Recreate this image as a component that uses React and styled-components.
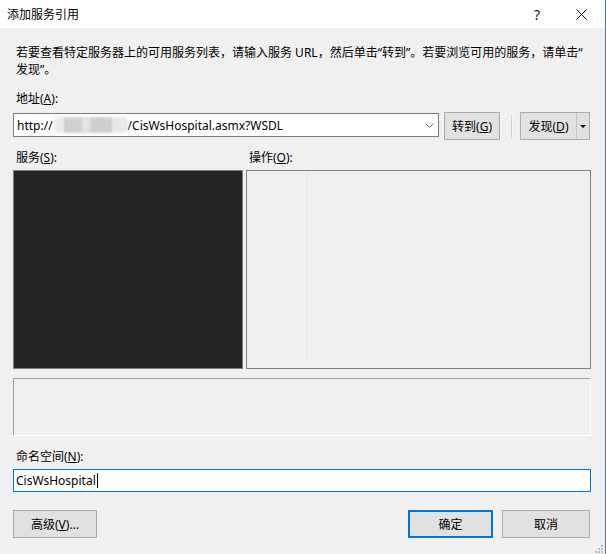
import React from "react";
import styled, { createGlobalStyle } from "styled-components";

const Global = createGlobalStyle`
  html, body { margin: 0; padding: 0; background: #f0f0f0; }
  body {
    font-family: "Segoe UI", "Noto Sans", "Noto Sans CJK SC", sans-serif;
    font-size: 12px;
    color: #000;
  }
  u { text-underline-offset: 1px; }
`;

const Window = styled.div`
  width: 606px;
  height: 554px;
  box-sizing: border-box;
  border-right: 1px solid #1a7fd4;
  background: #f0f0f0;
  display: flex;
  flex-direction: column;
  position: relative;
  overflow: hidden;
`;

const TitleBar = styled.div`
  height: 28px;
  flex: none;
  background: #fff;
  display: flex;
  align-items: center;
  padding-left: 7px;
  padding-right: 2px;
`;

const Title = styled.div`
  flex: 1;
  font-size: 12px;
  line-height: 16px;
  font-family: "Noto Sans CJK SC", sans-serif;
`;

const CaptionButton = styled.div`
  width: 44px;
  height: 28px;
  display: flex;
  align-items: center;
  justify-content: center;
  font-size: 14px;
  color: #111;
`;

const Content = styled.div`
  display: flex;
  flex-direction: column;
  padding: 16px 14px 0 13px;
`;

const Description = styled.div`
  padding-left: 3px;
  line-height: 17px;
  white-space: nowrap;
`;

const Line = styled.div`
  height: 17px;
`;

const Label = styled.div`
  padding-left: ${(p) => p.$indent || 3}px;
  margin-top: ${(p) => p.$top || 0}px;
  line-height: 16px;
  height: 16px;
  white-space: nowrap;
`;

const AddressRow = styled.div`
  margin-top: 5px;
  display: flex;
  align-items: flex-start;
  height: 28px;
`;

const Combo = styled.div`
  margin-top: 1px;
  width: 426px;
  height: 24px;
  box-sizing: border-box;
  border: 1px solid #7a7a7a;
  background: #fff;
  display: flex;
  align-items: center;
  padding-left: 3px;
  padding-right: 4px;
  white-space: nowrap;
`;

const ComboText = styled.div`
  flex: 1;
  display: flex;
  align-items: center;
`;

const Blurred = styled.span`
  display: inline-block;
  width: 74px;
  height: 16px;
  margin: 0 0 0 1px;
  border-radius: 5px;
  background: linear-gradient(
    90deg,
    #ebebeb 0 10px,
    #d0d0d0 10px 28px,
    #e4e4e4 28px 36px,
    #cfcfcf 36px 58px,
    #e8e8e8 58px
  );
  filter: blur(1.2px);
`;

const Button = styled.div`
  height: 28px;
  box-sizing: border-box;
  width: ${(p) => p.$w}px;
  margin-left: ${(p) => p.$ml || 0}px;
  margin-right: ${(p) => p.$mr || 0}px;
  background: #e1e1e1;
  border: ${(p) => (p.$default ? "2px solid #0078d7" : "1px solid #adadad")};
  display: flex;
  align-items: center;
  justify-content: center;
  white-space: nowrap;
`;

const Separator = styled.div`
  margin-left: 11px;
  margin-top: 3px;
  width: 1px;
  height: 24px;
  background: #cfcfcf;
  border-right: 1px solid #fafafa;
`;

const SplitButton = styled.div`
  margin-left: 7px;
  width: 70px;
  height: 28px;
  box-sizing: border-box;
  background: #e1e1e1;
  border: 1px solid #adadad;
  display: flex;
  align-items: stretch;
`;

const SplitMain = styled.div`
  flex: 1;
  display: flex;
  align-items: center;
  justify-content: center;
  white-space: nowrap;
`;

const SplitArrow = styled.div`
  width: 12px;
  border-left: 1px solid #c4c4c4;
  display: flex;
  align-items: center;
  justify-content: center;
`;

const LabelsRow = styled.div`
  margin-top: 10px;
  display: grid;
  grid-template-columns: 233px 1fr;
`;

const Panels = styled.div`
  margin-top: 4px;
  height: 199px;
  display: grid;
  grid-template-columns: 230px 1fr;
  column-gap: 3px;
`;

const ServicesList = styled.div`
  box-sizing: border-box;
  border: 1px solid #7d7d7d;
  background: #252525;
`;

const OperationsList = styled.div`
  box-sizing: border-box;
  border: 1px solid #828282;
  background: #f0f0f0;
  display: flex;
  align-items: flex-start;
`;

const OpsColumn = styled.div`
  width: 60px;
  height: 191px;
  border-right: 1px solid #e4e4e4;
`;

const DescBox = styled.div`
  margin-top: 9px;
  height: 58px;
  box-sizing: border-box;
  border: 1px solid;
  border-color: #a0a0a0 #ffffff #ffffff #a0a0a0;
`;

const TextBox = styled.div`
  margin-top: 4px;
  height: 23px;
  box-sizing: border-box;
  border: 1px solid #0078d7;
  background: #fff;
  display: flex;
  align-items: center;
  padding-left: 2px;
`;

const Caret = styled.span`
  display: inline-block;
  width: 1px;
  height: 15px;
  background: #000;
  margin-left: 1px;
`;

const ButtonRow = styled.div`
  margin-top: 18px;
  display: flex;
  align-items: center;
`;

const Spacer = styled.div`
  flex: 1;
`;

const Grip = styled.svg`
  position: absolute;
  right: 2px;
  bottom: 1px;
`;

export default function App() {
  return (
    <>
      <Global />
      <Window>
        <TitleBar>
          <Title>添加服务引用</Title>
          <CaptionButton>?</CaptionButton>
          <CaptionButton>
            <svg width="11" height="11" viewBox="0 0 11 11">
              <path d="M0.5 0.5 L10.5 10.5 M10.5 0.5 L0.5 10.5" stroke="#111" strokeWidth="1" />
            </svg>
          </CaptionButton>
        </TitleBar>
        <Content>
          <Description>
            <Line>若要查看特定服务器上的可用服务列表，请输入服务 URL，然后单击“转到”。若要浏览可用的服务，请单击“</Line>
            <Line>发现”。</Line>
          </Description>
          <Label $top={13}>
            地址(<u>A</u>):
          </Label>
          <AddressRow>
            <Combo>
              <ComboText>
                http://<Blurred />/CisWsHospital.asmx?WSDL
              </ComboText>
              <svg width="9" height="5" viewBox="0 0 9 5">
                <polyline points="0.5,0.5 4.5,4.5 8.5,0.5" fill="none" stroke="#6a6a6a" strokeWidth="1" />
              </svg>
            </Combo>
            <Button $w={56} $ml={5}>
              转到(<u>G</u>)
            </Button>
            <Separator />
            <SplitButton>
              <SplitMain>
                发现(<u>D</u>)
              </SplitMain>
              <SplitArrow>
                <svg width="6" height="3" viewBox="0 0 6 3">
                  <polygon points="0,0 6,0 3,3" fill="#000" />
                </svg>
              </SplitArrow>
            </SplitButton>
          </AddressRow>
          <LabelsRow>
            <Label>
              服务(<u>S</u>):
            </Label>
            <Label>
              操作(<u>O</u>):
            </Label>
          </LabelsRow>
          <Panels>
            <ServicesList />
            <OperationsList>
              <OpsColumn />
            </OperationsList>
          </Panels>
          <DescBox />
          <Label $top={13}>
            命名空间(<u>N</u>):
          </Label>
          <TextBox>
            CisWsHospital
            <Caret />
          </TextBox>
          <ButtonRow>
            <Button $w={84}>
              高级(<u>V</u>)...
            </Button>
            <Spacer />
            <Button $w={85} $default>
              确定
            </Button>
            <Button $w={88} $ml={9} $mr={1}>
              取消
            </Button>
          </ButtonRow>
        </Content>
        <Grip width="8" height="8" viewBox="0 0 8 8">
          <rect x="6" y="0" width="2" height="2" fill="#bdbdbd" />
          <rect x="3" y="3" width="2" height="2" fill="#bdbdbd" />
          <rect x="6" y="3" width="2" height="2" fill="#bdbdbd" />
          <rect x="0" y="6" width="2" height="2" fill="#bdbdbd" />
          <rect x="3" y="6" width="2" height="2" fill="#bdbdbd" />
          <rect x="6" y="6" width="2" height="2" fill="#bdbdbd" />
        </Grip>
      </Window>
    </>
  );
}
